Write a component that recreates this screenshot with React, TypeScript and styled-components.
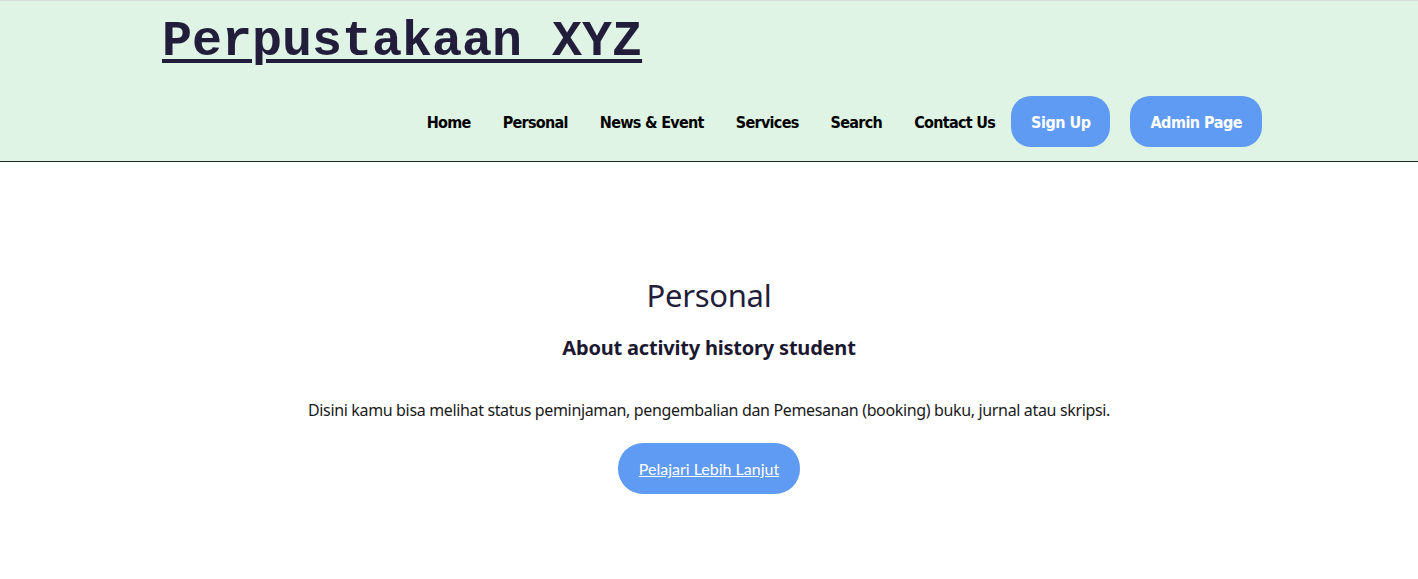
import React from 'react';
import styled, { createGlobalStyle } from 'styled-components';

const GlobalStyle = createGlobalStyle`
    body {
        margin: 0;
        background: #ffffff;
        font-family: "Comic Sans MS", "Noto Sans", sans-serif;
    }
`;

const navLinks = ['Home', 'Personal', 'News & Event', 'Services', 'Search', 'Contact Us'];

const Header = styled.header`
    background: #dff4e4;
    border-top: 1px solid #dcdcdc;
    border-bottom: 1px solid #1c2a22;
    padding: 0 156px 14px 162px;
`;

const Title = styled.h1`
    margin: 0;
    padding-top: 14px;
    font-family: "Liberation Mono", "Courier New", monospace;
    font-size: 50px;
    font-weight: 700;
    line-height: 54px;
    color: #221d3a;
    text-decoration: underline;
    text-decoration-thickness: 4px;
    text-underline-offset: 4px;
`;

const Nav = styled.nav`
    display: flex;
    justify-content: flex-end;
    align-items: center;
    margin-top: 27px;
`;

const NavLink = styled.a`
    padding: 1px 16px 0;
    font-family: "DejaVu Sans Condensed", "DejaVu Sans", sans-serif;
    font-size: 16px;
    font-weight: 700;
    letter-spacing: -0.7px;
    color: #000000;
    text-decoration: none;
`;

const NavButton = styled.a<{ $gap?: number }>`
    display: inline-flex;
    align-items: center;
    height: 51px;
    padding: 1px 20px 0;
    box-sizing: border-box;
    margin-left: ${(p) => p.$gap ?? 0}px;
    border-radius: 20px;
    background: #5f9af3;
    color: #ffffff;
    font-family: "DejaVu Sans Condensed", "DejaVu Sans", sans-serif;
    font-size: 16px;
    font-weight: 700;
    letter-spacing: -0.5px;
    text-decoration: none;
`;

const Main = styled.main`
    display: flex;
    flex-direction: column;
    align-items: center;
    padding-top: 111px;
    color: #221d3a;
`;

const Heading = styled.h2`
    margin: 0;
    font-size: 31px;
    font-weight: 400;
    line-height: 44px;
    letter-spacing: -0.3px;
`;

const SubHeading = styled.h3`
    margin: 19px 0 0;
    font-size: 20px;
    font-weight: 700;
    line-height: 24px;
    letter-spacing: -0.2px;
    color: #1b1830;
`;

const Text = styled.p`
    margin: 40px 0 0;
    font-size: 16px;
    line-height: 20px;
    letter-spacing: -0.35px;
    color: #1a1a1a;
`;

const LearnMore = styled.a`
    display: inline-flex;
    align-items: center;
    height: 51px;
    margin-top: 23px;
    padding: 0 21px;
    border-radius: 25px;
    background: #5f9af3;
    color: #ffffff;
    font-family: Lato, "Open Sans", sans-serif;
    font-size: 16px;
    text-decoration: underline;
`;

const App = () => (
    <>
        <GlobalStyle />
        <Header>
            <Title>Perpustakaan XYZ</Title>
            <Nav>
                {navLinks.map((link) => (
                    <NavLink key={link} href="#">
                        {link}
                    </NavLink>
                ))}
                <NavButton href="#">Sign Up</NavButton>
                <NavButton href="#" $gap={20}>
                    Admin Page
                </NavButton>
            </Nav>
        </Header>
        <Main>
            <Heading>Personal</Heading>
            <SubHeading>About activity history student</SubHeading>
            <Text>
                Disini kamu bisa melihat status peminjaman, pengembalian dan Pemesanan (booking) buku, jurnal atau
                skripsi.
            </Text>
            <LearnMore href="#">Pelajari Lebih Lanjut</LearnMore>
        </Main>
    </>
);

export default App;
